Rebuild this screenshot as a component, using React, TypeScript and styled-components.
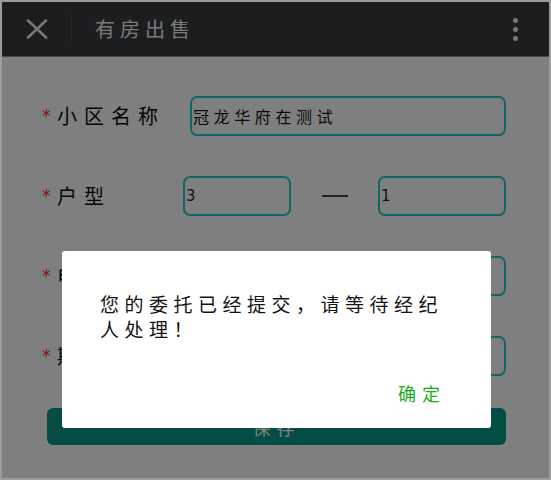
import React from 'react';
import styled, { createGlobalStyle } from 'styled-components';

const GlobalStyle = createGlobalStyle`
  html, body { margin: 0; padding: 0; background: #fff; }
  body {
    width: 551px;
    height: 480px;
    overflow: hidden;
    font-family: "Noto Sans CJK SC", "Noto Sans", sans-serif;
  }
  * { box-sizing: border-box; }
`;

const Frame = styled.div`
  position: relative;
  width: 551px;
  height: 480px;
  border: 2px solid #9c9c9c;
  background: #ffffff;
  overflow: hidden;
  display: flex;
  flex-direction: column;
`;

const TopBar = styled.header`
  flex: none;
  height: 55px;
  display: flex;
  align-items: center;
  padding: 0 31px 0 24px;
  background: #383a3e;
  border-bottom: 1px solid #8e8e8e;
`;

const CloseIcon = styled.svg`
  flex: none;
  display: block;
`;

const Divider = styled.span`
  flex: none;
  width: 1px;
  height: 28px;
  margin: 0 23px;
  background: #46484c;
`;

const Title = styled.h1`
  margin: 0;
  font-size: 20px;
  font-weight: 400;
  letter-spacing: 5px;
  color: #f2f2f2;
  line-height: 1;
`;

const MoreDots = styled.div`
  margin-left: auto;
  display: flex;
  flex-direction: column;
  gap: 4px;
`;

const Dot = styled.span`
  width: 5px;
  height: 5px;
  border-radius: 50%;
  background: #f0f0f0;
`;

const Form = styled.main`
  display: flex;
  flex-direction: column;
  gap: 40px;
  padding: 39px 43px 0 40px;
`;

const Field = styled.div`
  display: flex;
  align-items: center;
  height: 40px;
`;

const Label = styled.label<{ $width: number }>`
  flex: none;
  width: ${(p) => p.$width}px;
  display: flex;
  align-items: center;
  color: #0a0a0a;
  font-size: 20px;
  letter-spacing: 7px;
  line-height: 1;
  white-space: nowrap;
`;

const Required = styled.span`
  width: 15px;
  color: #ff2b2b;
  font-size: 17px;
  letter-spacing: 0;
  font-family: "DejaVu Sans", sans-serif;
`;

const Input = styled.input<{ $width?: number }>`
  ${(p) => (p.$width ? `flex: none; width: ${p.$width}px;` : 'flex: 1; min-width: 0;')}
  height: 40px;
  margin: 0;
  padding: 0 1px;
  border: 2px solid #22cfc2;
  border-radius: 7px;
  background: transparent;
  color: #141414;
  font-family: "Noto Sans CJK SC", "Noto Sans", sans-serif;
  font-size: 16px;
  letter-spacing: 4.6px;
  outline: none;
`;

const NumberInput = styled(Input)`
  font-family: "DejaVu Sans", sans-serif;
  font-size: 15px;
  letter-spacing: 0;
  color: #2a2a2a;
`;

const RangeDash = styled.span`
  flex: none;
  width: 87px;
  display: flex;
  justify-content: center;
  &::before {
    content: "";
    width: 26px;
    height: 2px;
    background: #444;
  }
`;

const SaveButton = styled.button`
  margin: -8px 0 0 5px;
  height: 37px;
  border: none;
  border-radius: 6px;
  background: #089a8a;
  color: #ffffff;
  font-family: "Noto Sans CJK SC", "Noto Sans", sans-serif;
  font-size: 18px;
  letter-spacing: 6px;
`;

const Backdrop = styled.div`
  position: absolute;
  inset: 0;
  background: rgba(0, 0, 0, 0.5);
`;

const Dialog = styled.div`
  position: absolute;
  left: 60px;
  top: 249px;
  width: 429px;
  height: 177px;
  display: flex;
  flex-direction: column;
  padding: 40px 45px 23px 38px;
  background: #ffffff;
  border-radius: 3px;
`;

const Message = styled.p`
  margin: 0;
  max-width: 353px;
  font-size: 19px;
  line-height: 25px;
  letter-spacing: 5.5px;
  color: #141414;
`;

const Actions = styled.div`
  margin-top: auto;
  display: flex;
  justify-content: flex-end;
`;

const ConfirmButton = styled.button`
  padding: 0;
  border: none;
  background: none;
  color: #1aad19;
  font-family: "Noto Sans CJK SC", "Noto Sans", sans-serif;
  font-size: 18px;
  line-height: 24px;
  letter-spacing: 6px;
`;

export default function App() {
  return (
    <>
      <GlobalStyle />
      <Frame>
        <TopBar>
          <CloseIcon width="22" height="20" viewBox="0 0 22 20">
            <path d="M2 1.5 L20 18.5 M20 1.5 L2 18.5" stroke="#f0f0f0" strokeWidth="2.6" strokeLinecap="round" />
          </CloseIcon>
          <Divider />
          <Title>有房出售</Title>
          <MoreDots>
            <Dot />
            <Dot />
            <Dot />
          </MoreDots>
        </TopBar>
        <Form>
          <Field>
            <Label $width={148}>
              <Required>*</Required>小区名称
            </Label>
            <Input readOnly value="冠龙华府在测试" />
          </Field>
          <Field>
            <Label $width={141}>
              <Required>*</Required>户型
            </Label>
            <NumberInput $width={108} readOnly value="3" />
            <RangeDash />
            <NumberInput readOnly value="1" />
          </Field>
          <Field>
            <Label $width={141}>
              <Required>*</Required>电话
            </Label>
            <Input readOnly value="" />
          </Field>
          <Field>
            <Label $width={141}>
              <Required>*</Required>期望售价
            </Label>
            <Input readOnly value="" />
          </Field>
          <SaveButton>保存</SaveButton>
        </Form>
        <Backdrop>
          <Dialog role="dialog">
            <Message>您的委托已经提交，请等待经纪人处理！</Message>
            <Actions>
              <ConfirmButton>确定</ConfirmButton>
            </Actions>
          </Dialog>
        </Backdrop>
      </Frame>
    </>
  );
}
